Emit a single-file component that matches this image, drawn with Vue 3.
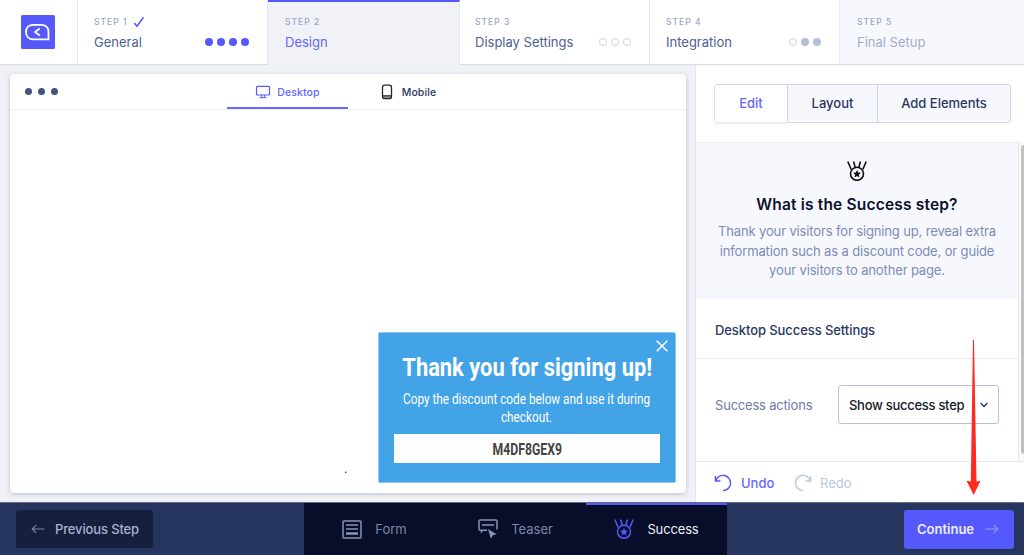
<script setup>
const steps = [
  { label: 'STEP 1', title: 'General', done: true, dots: ['full', 'full', 'full', 'full'], kind: 's1' },
  { label: 'STEP 2', title: 'Design', dots: [], kind: 's2 active' },
  { label: 'STEP 3', title: 'Display Settings', dots: ['ring', 'ring', 'ring'], kind: 's3' },
  { label: 'STEP 4', title: 'Integration', dots: ['ring', 'soft', 'soft'], kind: 's4' },
  { label: 'STEP 5', title: 'Final Setup', dots: [], kind: 's5 muted' }
]
</script>

<template>
  <div class="app">
    <header class="top">
      <div class="brand">
        <svg width="34" height="34" viewBox="0 0 34 34">
          <rect width="34" height="34" rx="1.5" fill="#5558fb" />
          <path d="M27.5 24.3V17c0-4.5-3-7.2-7.2-7.2h-8.1c-4.2 0-7.2 2.800-7.200 7.200s3 7.300 7.200 7.300z" fill="none" stroke="#fff" stroke-width="1.800" />
          <path d="M18.800 13.500L14 17l4.800 3.500" fill="none" stroke="#fff" stroke-width="1.700" />
        </svg>
      </div>
      <div v-for="s in steps" :key="s.label" class="step" :class="s.kind">
        <div class="label">
          <span>{{ s.label }}</span>
          <svg v-if="s.done" width="12" height="12" viewBox="0 0 12 12"><path d="M1.300 7l2.700 3.300L10.400 1.300" fill="none" stroke="#5558fb" stroke-width="1.500" /></svg>
        </div>
        <div class="line">
          <span class="title">{{ s.title }}</span>
          <span class="dots"><i v-for="(d, i) in s.dots" :key="i" :class="d"></i></span>
        </div>
      </div>
    </header>

    <main class="body">
      <section class="stage">
        <div class="preview">
          <div class="bar">
            <span class="window"><i></i><i></i><i></i></span>
            <div class="device on">
              <svg width="16" height="14" viewBox="0 0 16 14" fill="none" stroke="#5558fb"><rect x="1.500" y="1.300" width="13" height="8.700" rx="1" stroke-width="1.200" /><path d="M6.600 10v2.500M9.400 10v2.500M4.500 12.700h7" /></svg>
              <span>Desktop</span>
            </div>
            <div class="device">
              <svg width="12" height="16" viewBox="0 0 12 16"><path d="M1.500 11.500h9V13q0 2-2 2h-5q-2 0-2-2z" fill="#8b8e92" /><rect x="1.500" y="1.200" width="9" height="13.500" rx="2.200" fill="none" stroke="#26292f" stroke-width="1.300" /><path d="M1.500 11.800h9" stroke="#26292f" /></svg>
              <span>Mobile</span>
            </div>
          </div>
          <div class="canvas">
            <span class="speck">.</span>
            <div class="popup">
              <svg class="close" width="12" height="12" viewBox="0 0 12 12"><path d="M.700.700l10.600 10.600M11.300.700L.700 11.300" stroke="#fff" stroke-width="1.500" /></svg>
              <h1><span>Thank you for signing up!</span></h1>
              <p><span>Copy the discount code below and use it during<br>checkout.</span></p>
              <div class="code"><span>M4DF8GEX9</span></div>
            </div>
          </div>
        </div>
      </section>

      <aside class="side">
        <div class="tabs">
          <span class="tab sel">Edit</span><span class="tab">Layout</span><span class="tab">Add Elements</span>
        </div>
        <div class="scroll">
          <div class="content">
            <div class="info">
              <svg class="medal" width="20" height="20" viewBox="0 0 20 20" fill="none" stroke="#101010" stroke-width="1.600">
                <circle cx="10" cy="12.800" r="6.500" /><path d="M.800.500l3.400 8M19.200.500l-3.400 8M6.600.500l1.500 5.600M13.400.500l-1.500 5.600" />
                <path d="M10 8.900l1.200 2.500 2.700.4-2 1.900.5 2.700-2.400-1.300-2.400 1.300.5-2.700-2-1.900 2.700-.4z" fill="#101010" stroke="none" />
              </svg>
              <h2>What is the Success step?</h2>
              <p>Thank your visitors for signing up, reveal extra<br>information such as a discount code, or guide<br>your visitors to another page.</p>
            </div>
            <h3>Desktop Success Settings</h3>
            <div class="field">
              <span class="name">Success actions</span>
              <div class="select"><span>Show success step</span>
                <svg width="8" height="6" viewBox="0 0 8 6"><path d="M.700 1l3.300 3.500L7.300 1" fill="none" stroke="#26355d" stroke-width="1.400" /></svg>
              </div>
            </div>
          </div>
          <div class="track"><i></i></div>
        </div>
        <div class="history">
          <svg width="18" height="18" viewBox="0 0 18 18" fill="none" stroke="#5558fb" stroke-width="1.400"><path d="M1.400 2v5h5M1.700 6.700A7.600 7.600 0 1 1 9 16.600" /></svg>
          <span class="undo">Undo</span>
          <svg width="18" height="18" viewBox="0 0 18 18" fill="none" stroke="#bdc6dd" stroke-width="1.400"><path d="M16.600 2v5h-5M16.300 6.700A7.600 7.600 0 1 0 9 16.600" /></svg>
          <span class="redo">Redo</span>
        </div>
      </aside>
    </main>

    <footer class="foot">
      <div class="prev">
        <svg width="14" height="10" viewBox="0 0 14 10"><path d="M13.500 5H1.500M5 1.200L1.200 5 5 8.800" fill="none" stroke="#7b88ae" stroke-width="1.100" /></svg>
        <span>Previous Step</span>
      </div>
      <nav>
        <div class="mode">
          <svg width="20" height="19" viewBox="0 0 20 19" fill="none" stroke="#8793b7" stroke-width="1.500"><rect x="1" y="1" width="18" height="17" rx="1" /><path d="M4 5h12M4 9h12" /><path d="M4 13.500h12" stroke-width="2.600" /></svg>
          <span class="form">Form</span>
        </div>
        <div class="mode">
          <svg width="20" height="20" viewBox="0 0 20 20"><path d="M9 11.300H4.800L3.500 12.600V11.300H2q-1 0-1-1V2q0-1 1-1h16q1 0 1 1v8.500M4 6h12" fill="none" stroke="#8793b7" stroke-width="1.500" /><path d="M10 10l8.700 5.300-3.900.9-1.900 3.600z" fill="#8793b7" /></svg>
          <span class="teaser">Teaser</span>
        </div>
        <div class="mode current">
          <svg width="20" height="20" viewBox="0 0 20 20" fill="none" stroke="#5558fb" stroke-width="1.500">
            <circle cx="10" cy="12.800" r="6.500" /><path d="M.800.500l3.400 8M19.200.500l-3.400 8M6.600.500l1.500 5.600M13.400.500l-1.500 5.600" />
            <path d="M10 8.900l1.200 2.500 2.700.4-2 1.900.5 2.700-2.400-1.300-2.400 1.300.5-2.700-2-1.900 2.700-.4z" fill="#5558fb" stroke="none" />
          </svg>
          <span class="succ">Success</span>
        </div>
      </nav>
      <div class="next">
        <span>Continue</span>
        <svg width="14" height="10" viewBox="0 0 14 10"><path d="M.500 5h12M9 1.200L12.800 5 9 8.800" fill="none" stroke="#9799fd" stroke-width="1.100" /></svg>
      </div>
    </footer>

    <svg class="pointer" width="16" height="156" viewBox="0 0 16 156"><path d="M8 0h1l2.500 141.500 4-.700L8.700 155 1.500 140.800l4.300.7z" fill="#fc2a20" /></svg>
  </div>
</template>

<style>
body { overflow: hidden; }
</style>

<style scoped>
* { box-sizing: border-box; }
.app { position: relative; width: 1024px; height: 555px; display: flex; flex-direction: column; background: #f0f2f7; font-family: Inter, sans-serif; color: #293860; white-space: nowrap; }
svg { display: block; flex: none; }
h1, h2, h3, p { margin: 0; font-weight: normal; }

.top { display: grid; grid-template-columns: 78px 190px 192px 190px 190px 184px; height: 65px; flex: none; position: relative; z-index: 1; }
.brand { background: #fff; border-right: 1px solid #e9ebf3; padding: 15px 0 0 21px; box-shadow: 0 1px 1px #dcdfe7; height: 64px; }
.step { background: #fff; border-right: 1px solid #e9ebf3; padding: 15px 18px 0 16px; box-shadow: 0 1px 1px #dcdfe7; height: 64px; }
.active { background: #f0f2f7; border-top: 2px solid #5558fb; padding-top: 13px; padding-left: 17px; box-shadow: none; height: 65px; }
.s3 { padding-left: 15px; }
.muted { background: #f7f8fd; border: 0; padding-left: 17px; }
.label { display: flex; gap: 6px; align-items: center; height: 14px; font-size: 8.500px; letter-spacing: 1px; color: #98a5c5; font-weight: 500; }
.line { display: flex; justify-content: space-between; align-items: center; height: 18px; margin-top: 4px; }
.title { font-size: 13px; color: #50618d; margin-top: -1px; }
.active .title { color: #6467fb; }
.muted .title { color: #a0acca; }
.dots { display: flex; gap: 4px; }
.dots i { width: 8px; height: 8px; border-radius: 50%; }
.full { background: #5558fb; }
.ring { border: 1px solid #cdd4e5; }
.soft { background: #b3bfdb; }

.body { display: flex; flex: 1; min-height: 0; }
.stage { width: 695px; padding: 9px 9px 10px 10px; }
.preview { height: 419px; width: 676px; background: #fff; border-radius: 4px; box-shadow: 0 1px 4px #b7bdca; display: flex; flex-direction: column; }
.bar { height: 36px; border-bottom: 1px solid #eef0f7; display: flex; flex: none; }
.window { display: flex; align-items: center; gap: 6px; width: 217px; padding-left: 15px; }
.window i { width: 7px; height: 7px; border-radius: 50%; background: #43547f; }
.device { width: 121px; height: 35px; display: flex; align-items: center; justify-content: center; gap: 6px; font-size: 10.500px; font-weight: 500; letter-spacing: .1px; padding-top: 1px; }
.device + .device { gap: 9px; }
.on { border-bottom: 2px solid #6669fb; color: #6467fb; padding-top: 3px; }
.canvas { flex: 1; padding: 222px 10px 9px 368px; position: relative; }
.speck { position: absolute; left: 334px; top: 351px; font-size: 12px; color: #333; }
.popup { position: relative; height: 151px; width: 298px; background: #42a3e7; border: 1px solid #8dc7ef; border-radius: 2px; color: #fff; font-family: Roboto, sans-serif; text-align: center; padding: 17px 15px 0; }
.close { position: absolute; right: 7px; top: 7px; }
.popup h1 { height: 34px; line-height: 34px; font-size: 26.500px; font-weight: 700; display: flex; justify-content: center; }
.popup h1 span { transform: scaleX(.826); }
.popup p { margin-top: 6px; height: 36px; line-height: 18px; font-size: 15.500px; display: flex; justify-content: center; }
.popup p span { transform: scaleX(.76); }
.code { height: 29px; margin-top: 8px; background: #fff; color: #444; font-size: 17px; font-weight: 700; line-height: 30px; display: flex; justify-content: center; }
.code span { transform: scaleX(.72); }

.side { width: 329px; background: #fff; border-left: 1px solid #e3e6ef; display: flex; flex-direction: column; }
.tabs { display: grid; grid-template-columns: 72px 90px 133px; margin: 19px 0 19px 18px; height: 39px; width: 297px; border: 1px solid #d2d8ea; border-radius: 3px; flex: none; background: #f7f8fd; }
.tab { display: flex; align-items: center; justify-content: center; font-size: 13px; font-weight: 500; border-left: 1px solid #cbd3e7; padding-bottom: 1px; }
.sel { color: #6467fb; background: #fff; border-left: 0; box-shadow: 0 2px 2px #e9ebf3; }
.scroll { display: flex; height: 320px; flex: none; border-bottom: 1px solid #e5e9f3; }
.content { width: 322px; }
.track { flex: 1; background: #fafafa; border-left: 1px solid #e8e8e8; padding: 3px 0 0 2px; }
.track i { display: block; height: 309px; background: #c1c1c1; border-radius: 4px 0 0 4px; }
.info { height: 157px; background: #f7f8fd; border-top: 1px solid #edf0f5; text-align: center; padding-top: 18px; }
.medal { margin: 0 auto; }
.info h2 { font-size: 15.500px; font-weight: 600; color: #0b1230; margin-top: 14px; line-height: 20px; letter-spacing: .18px; }
.info p { font-size: 13px; line-height: 19.500px; color: #7c8cb5; margin-top: 7px; letter-spacing: -.14px; }
h3 { height: 60px; border-bottom: 1px solid #e8edf5; padding: 0 0 0 19px; line-height: 63px; font-size: 13px; font-weight: 500; letter-spacing: -.08px; }
.field { display: flex; align-items: center; justify-content: space-between; padding: 26px 19px 0 19px; }
.name { font-size: 13px; color: #6b7ca7; letter-spacing: -.2px; }
.select { width: 161px; height: 39px; border: 1px solid #b5c0db; border-radius: 3px; display: flex; align-items: center; justify-content: space-between; padding: 0 10px; font-size: 13px; color: #15192c; font-weight: 500; letter-spacing: -.28px; }
.history { display: flex; align-items: center; height: 40px; padding: 2px 0 0 18px; font-size: 13px; }
.undo { color: #6467fb; margin: 0 20px 0 9px; width: 33px; font-weight: 500; }
.redo { color: #bdc6dd; margin-left: 8px; }

.foot { position: relative; height: 53px; flex: none; background: #26355d; border-top: 1px solid #626b83; display: flex; color: #fff; font-size: 13px; }
.prev { margin: 7px 151px 0 16px; width: 137px; height: 38px; background: #151f3e; border-radius: 3px; display: flex; align-items: center; padding-left: 15px; gap: 10px; font-size: 13px; font-weight: 500; color: #a7b1cf; letter-spacing: -.14px; }
nav { width: 423px; display: grid; grid-template-columns: 141px 141px 141px; background: #080e29; }
.mode { display: flex; align-items: center; justify-content: center; gap: 13px; color: #7b87a8; }
.current { border-top: 2px solid #5558fb; color: #eceef6; padding-bottom: 2px; letter-spacing: -.15px; }
.next { margin: 7px 0 0 177px; width: 110px; height: 39px; border-radius: 3px; background: #5558fb; display: flex; align-items: center; gap: 11px; padding: 0 0 1px 13px; color: #eceefe; font-weight: 600; }
.pointer { position: absolute; left: 965px; top: 340px; z-index: 3; }
</style>
